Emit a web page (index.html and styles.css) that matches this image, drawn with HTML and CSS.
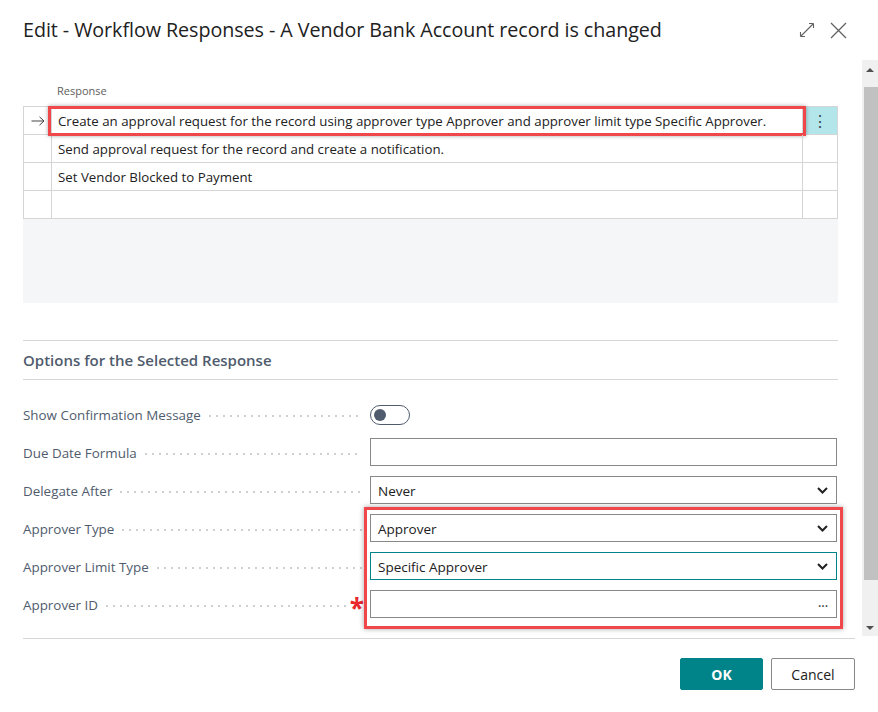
FILE: index.html
```html
<!DOCTYPE html>
<html lang="en">
<head>
<meta charset="utf-8">
<title>Edit - Workflow Responses</title>
<link rel="stylesheet" href="styles.css">
</head>
<body>
<div class="dialog">
  <header class="head">
    <h1 class="title">Edit - Workflow Responses - A Vendor Bank Account record is changed</h1>
    <div class="head-actions">
      <svg class="icon-expand" width="16" height="16" viewBox="0 0 16 16"><path d="M1.5 14.5 L14.5 1.5 M1.5 14.5 L1.5 10 M1.5 14.5 L6 14.5 M14.5 1.5 L10 1.5 M14.5 1.5 L14.5 6" fill="none" stroke="#616161" stroke-width="1.1"/></svg>
      <svg class="icon-close" width="17" height="17" viewBox="0 0 17 17"><path d="M1 1 L16 16 M16 1 L1 16" fill="none" stroke="#616161" stroke-width="1.3"/></svg>
    </div>
  </header>
  <div class="body">
    <main class="content">
      <div class="grid-label">Response</div>
      <div class="grid">
        <div class="row selected">
          <div class="cell marker"><svg width="14" height="10" viewBox="0 0 14 10"><path d="M0.5 5 H13 M8.5 0.8 L13 5 L8.5 9.2" fill="none" stroke="#444" stroke-width="1"/></svg></div>
          <div class="cell text">Create an approval request for the record using approver type Approver and approver limit type Specific Approver.<span class="hl-row"></span></div>
          <div class="cell more">⋮</div>
        </div>
        <div class="row">
          <div class="cell marker"></div>
          <div class="cell text">Send approval request for the record and create a notification.</div>
          <div class="cell more"></div>
        </div>
        <div class="row">
          <div class="cell marker"></div>
          <div class="cell text">Set Vendor Blocked to Payment</div>
          <div class="cell more"></div>
        </div>
        <div class="row">
          <div class="cell marker"></div>
          <div class="cell text"></div>
          <div class="cell more"></div>
        </div>
      </div>
      <div class="grid-empty"></div>

      <section class="options">
        <h2 class="section-title">Options for the Selected Response</h2>
        <div class="fields">
          <div class="field">
            <div class="label"><span class="label-text">Show Confirmation Message</span><span class="leader"></span></div>
            <div class="control"><span class="toggle"><span class="knob"></span></span></div>
          </div>
          <div class="field">
            <div class="label"><span class="label-text">Due Date Formula</span><span class="leader"></span></div>
            <div class="control"><div class="input"></div></div>
          </div>
          <div class="field">
            <div class="label"><span class="label-text">Delegate After</span><span class="leader"></span></div>
            <div class="control"><div class="input select"><span>Never</span><svg class="chev" width="11" height="7" viewBox="0 0 11 7"><path d="M1 1 L5.5 5.5 L10 1" fill="none" stroke="#222" stroke-width="2"/></svg></div></div>
          </div>
          <div class="field">
            <div class="label"><span class="label-text">Approver Type</span><span class="leader"></span></div>
            <div class="control"><div class="input select"><span>Approver</span><svg class="chev" width="11" height="7" viewBox="0 0 11 7"><path d="M1 1 L5.5 5.5 L10 1" fill="none" stroke="#222" stroke-width="2"/></svg></div></div>
          </div>
          <div class="field">
            <div class="label"><span class="label-text">Approver Limit Type</span><span class="leader"></span></div>
            <div class="control"><div class="input select focused"><span>Specific Approver</span><svg class="chev" width="11" height="7" viewBox="0 0 11 7"><path d="M1 1 L5.5 5.5 L10 1" fill="none" stroke="#222" stroke-width="2"/></svg></div></div>
          </div>
          <div class="field">
            <div class="label"><span class="label-text">Approver ID</span><span class="leader"></span><span class="required">*</span></div>
            <div class="control"><div class="input lookup"><span></span><span class="dots">···</span></div></div>
          </div>
          <span class="hl-fields"></span>
        </div>
      </section>
    </main>
    <div class="scrollbar">
      <span class="sb-up"></span>
      <span class="sb-thumb"></span>
      <span class="sb-down"></span>
    </div>
  </div>
  <footer class="foot">
    <button class="btn primary">OK</button>
    <button class="btn">Cancel</button>
  </footer>
</div>
</body>
</html>
```
FILE: styles.css
```css
* { box-sizing: border-box; }
html, body { margin: 0; padding: 0; background: #fff; }
body {
  font-family: "Segoe UI", "Open Sans", "Noto Sans", sans-serif;
  color: #212121;
  width: 878px;
  height: 712px;
  overflow: hidden;
}
.dialog { display: flex; flex-direction: column; width: 878px; height: 712px; }

.head {
  height: 60px;
  display: flex;
  align-items: center;
  padding: 0 31px 0 23px;
}
.title {
  margin: 0;
  flex: 1;
  font-size: 19.7px;
  font-weight: 400;
  color: #212121;
  line-height: 24px;
  letter-spacing: -0.05px;
}
.head-actions { display: flex; align-items: center; gap: 15px; }
.icon-expand, .icon-close { display: block; }

.body { display: flex; height: 578px; }
.content { width: 815px; margin-left: 23px; padding-top: 20px; }

.grid-label {
  height: 22px;
  line-height: 22px;
  font-size: 11px;
  color: #605e5c;
  padding-left: 34px;
  margin-bottom: 4px;
}
.grid {
  border-top: 1px solid #d5d5d5;
  border-left: 1px solid #d5d5d5;
  border-right: 1px solid #d5d5d5;
}
.row {
  display: flex;
  height: 28px;
  border-bottom: 1px solid #d5d5d5;
}
.cell { border-right: 1px solid #d5d5d5; display: flex; align-items: center; }
.cell:last-child { border-right: 0; }
.marker { width: 28px; justify-content: center; }
.text {
  width: 751px;
  padding-left: 6px;
  font-size: 13.28px;
  white-space: nowrap;
  position: relative;
}
.more { width: 34px; justify-content: center; font-size: 16px; color: #3b4656; }
.selected .more { background: #b3e6ea; }
.hl-row {
  position: absolute;
  left: -4px;
  right: -4px;
  top: -1px;
  bottom: -2px;
  border: 3px solid #f0474a;
  box-shadow: 0 0 4px rgba(0,0,0,0.35);
  pointer-events: none;
}
.grid-empty { height: 84px; background: #f5f6f8; margin-bottom: 37px; }

.options { border-top: 1px solid #d6d6d6; }
.section-title {
  margin: 0;
  height: 39px;
  line-height: 39px;
  font-size: 15px;
  font-weight: 600;
  color: #505c6d;
  border-bottom: 1px solid #d6d6d6;
}
.fields {
  position: relative;
  margin-top: 20px;
  display: grid;
  grid-template-columns: 347px 467px;
  row-gap: 10px;
}
.field { display: contents; }
.label { display: flex; align-items: center; height: 28px; padding-right: 8px; padding-top: 2px; }
.label-text { font-size: 13.4px; color: #505c6d; white-space: nowrap; }
.leader {
  flex: 1;
  height: 2px;
  margin-left: 8px;
  background-image: linear-gradient(to right, #cfcfcf 2px, transparent 2px);
  background-size: 7px 2px;
  background-repeat: repeat-x;
  margin-top: 2px;
}
.required {
  color: #e8262b;
  font-size: 26px;
  font-weight: 700;
  line-height: 1;
  height: 28px;
  padding-top: 4px;
  margin-left: 4px;
  margin-right: -2px;
}
.control { height: 28px; display: flex; align-items: center; }
.toggle {
  width: 40px;
  height: 20px;
  margin-top: 2px;
  border: 1.5px solid #505c6d;
  border-radius: 10px;
  display: flex;
  align-items: center;
  padding-left: 3px;
}
.knob { width: 12px; height: 12px; border-radius: 50%; background: #505c6d; }
.input {
  width: 100%;
  height: 28px;
  border: 1px solid #8a8886;
  background: #fff;
  display: flex;
  align-items: center;
  justify-content: space-between;
  padding: 1px 7px 0 7px;
  font-size: 13.5px;
  color: #212121;
}
.input.focused { border-color: #00848a; }
.chev { display: block; margin-right: 1px; }
.dots { font-size: 15px; color: #444; letter-spacing: -0.5px; margin-right: 1px; }
.hl-fields {
  position: absolute;
  left: 341px;
  width: 479px;
  top: 107px;
  height: 122px;
  border: 3px solid #f0474a;
  box-shadow: 0 0 5px rgba(0,0,0,0.35);
  pointer-events: none;
}

.scrollbar {
  width: 16px;
  height: 576px;
  margin-left: auto;
  background: #f0f0f0;
  display: flex;
  flex-direction: column;
  align-items: center;
}
.sb-up {
  margin-top: 8px;
  width: 0; height: 0;
  border-left: 4px solid transparent;
  border-right: 4px solid transparent;
  border-bottom: 4px solid #505050;
}
.sb-thumb {
  margin-top: 15px;
  margin-left: 2px;
  width: 14px;
  height: 493px;
  background: #c1c1c1;
}
.sb-down {
  margin-top: 46px;
  width: 0; height: 0;
  border-left: 4px solid transparent;
  border-right: 4px solid transparent;
  border-top: 4px solid #505050;
}

.foot {
  margin: 0 23px;
  border-top: 1px solid #d6d6d6;
  padding-top: 19px;
  display: flex;
  justify-content: flex-end;
  gap: 8px;
}
.btn {
  height: 32px;
  width: 84px;
  border: 1px solid #8a8886;
  background: #fff;
  border-radius: 2px;
  font-family: inherit;
  font-size: 14px;
  color: #212121;
}
.btn.primary {
  width: 83px;
  background: #00848a;
  border-color: #00848a;
  color: #fff;
  font-weight: 700;
}
```
